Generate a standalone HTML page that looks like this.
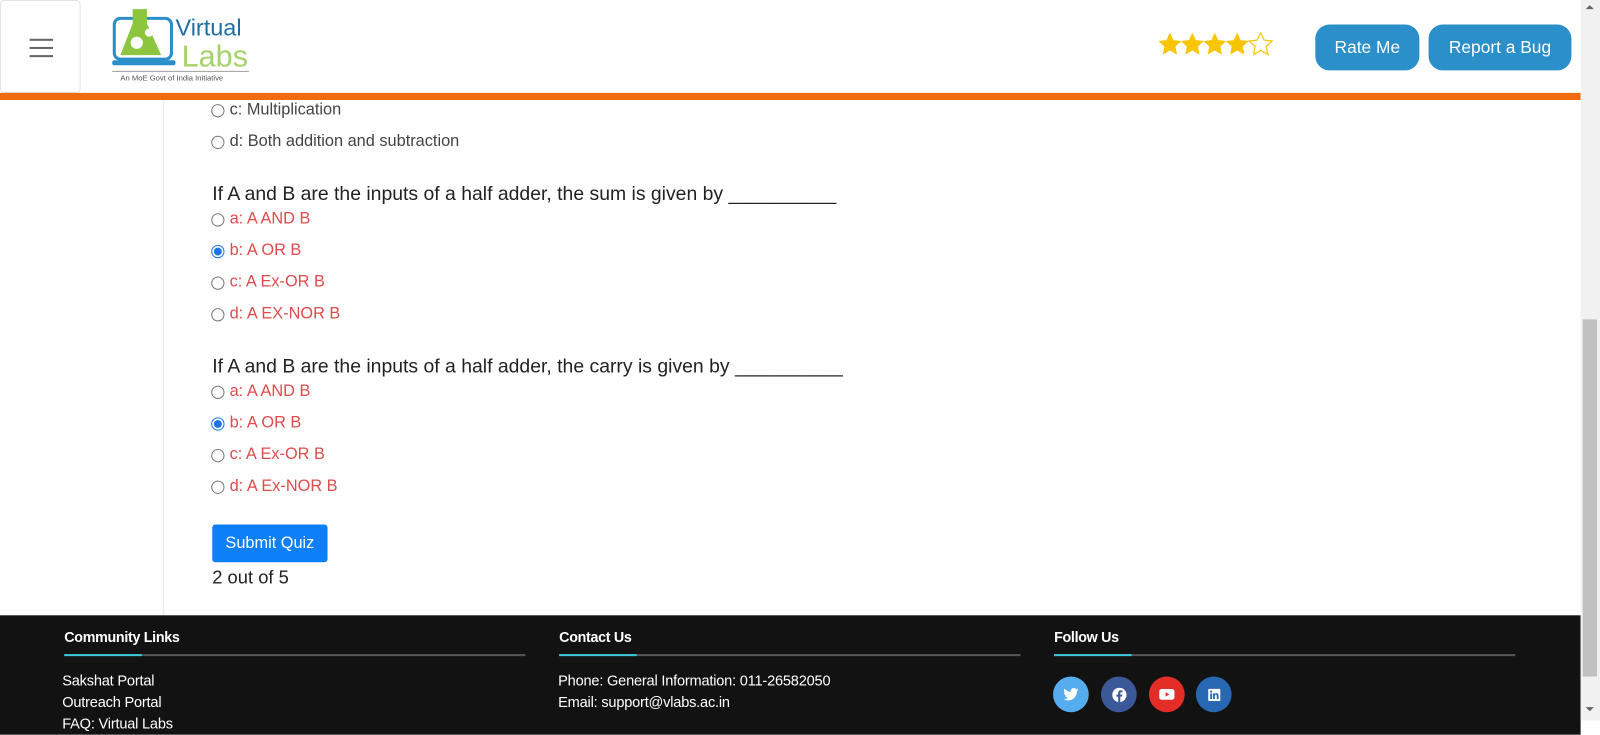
<!DOCTYPE html>
<html><head><meta charset="utf-8"><style>
*{margin:0;padding:0;box-sizing:border-box}
body{width:1600px;height:720px;overflow:hidden;background:#fff;font-family:"Liberation Sans",sans-serif;position:relative}
#w{position:absolute;left:0;top:0;width:1568px;height:706px;transform:scale(1.0204);transform-origin:0 0}
.hdr{position:absolute;left:0;top:0;width:1549px;height:91px;background:#fff}
.burger{position:absolute;left:0;top:0;width:79px;height:91px;border:1px solid #e3e3e3;border-radius:4px}
.burger i{position:absolute;left:28px;width:23px;height:2px;background:#666}
.orange{position:absolute;left:0;top:91px;width:1549px;height:7px;background:#f26a0e}
.btn{position:absolute;top:24px;height:45px;background:#2b8fca;color:#fff;border-radius:14px;font-size:17px;text-align:center;line-height:45px}
.side{position:absolute;left:160px;top:98px;width:1px;height:505px;background:#e5e5e5}
.q{position:absolute;left:208px;font-size:19px;color:#222}
.o{position:absolute;left:207px;font-size:16px;color:#e04b4b;display:flex;align-items:center}
.o.k{color:#444}
.o span.r{width:13px;height:13px;border:1px solid #777;border-radius:50%;margin-right:5px;display:inline-block}
.o span.r.c{border:1px solid #1a73e8;background:radial-gradient(circle,#1a73e8 3.5px,#fff 4.2px)}
.sub{position:absolute;left:208px;top:514px;width:113px;height:37px;background:#0d7ff7;color:#fff;font-size:16px;line-height:37px;text-align:center;border-radius:3px}
.foot{position:absolute;left:0;top:603px;width:1549px;height:117px;background:#121212;color:#fff}
.fh{position:absolute;top:13px;font-size:14px;font-weight:bold;letter-spacing:-0.3px}
.fl{position:absolute;top:38px;height:2px;width:452px;background:#555}
.fl b{display:block;width:76px;height:2px;background:#3ec5d8}
.ft{position:absolute;font-size:14.3px;letter-spacing:-0.2px}
.soc{position:absolute;top:60px;width:35px;height:35px;border-radius:50%;display:flex;align-items:center;justify-content:center}
.sb{position:absolute;left:1549px;top:0;width:19px;height:706px;background:#f1f1f1}
</style></head><body><div id="w">
<div class="hdr">
 <div class="burger"><i style="top:37px"></i><i style="top:45px"></i><i style="top:53px"></i></div>
 <svg style="position:absolute;left:108px;top:6px" width="140" height="78" viewBox="0 0 140 78">
  <rect x="4" y="12" width="56" height="40" rx="6" fill="none" stroke="#2a8fca" stroke-width="3"/>
  <rect x="2" y="53" width="62" height="5" rx="2" fill="#2a8fca"/>
  <path d="M22 3h14v14l14 31H10l12-31z" fill="#8cc63f"/>
  <circle cx="26" cy="36" r="6" fill="#fff"/><circle cx="38" cy="26" r="4" fill="#fff"/>
  <text x="64" y="29" font-family="Liberation Sans" font-size="23" fill="#1d6fa5">Virtual</text>
  <text x="70" y="59" font-family="Liberation Sans" font-size="30" fill="#a6d26a">Labs</text>
  <line x1="2" y1="64" x2="136" y2="64" stroke="#aaa"/>
  <text x="10" y="73" font-family="Liberation Sans" font-size="7.5" fill="#555">An MoE Govt of India Initiative</text>
 </svg>
 <svg style="position:absolute;left:1135px;top:32px" width="114" height="23" viewBox="0 0 114 23">
  <defs><path id="s" d="M11.5 0l3.4 7.3 7.9.9-5.9 5.4 1.6 7.9-7-4-7 4 1.6-7.9L.2 8.2l7.9-.9z"/></defs>
  <use href="#s" fill="#f7c600"/><use href="#s" x="22" fill="#f7c600"/><use href="#s" x="44" fill="#f7c600"/><use href="#s" x="66" fill="#f7c600"/>
  <use href="#s" x="89" fill="none" stroke="#f7c600" stroke-width="1.2"/>
 </svg>
 <div class="btn" style="left:1289px;width:102px">Rate Me</div>
 <div class="btn" style="left:1400px;width:140px">Report a Bug</div>
</div>
<div class="orange"></div>
<div class="side"></div>
<div class="o k" style="top:99px"><span class="r"></span>c: Multiplication</div>
<div class="o k" style="top:130px"><span class="r"></span>d: Both addition and subtraction</div>
<div class="q" style="top:180px">If A and B are the inputs of a half adder, the sum is given by __________</div>
<div class="o" style="top:206px"><span class="r"></span>a: A AND B</div>
<div class="o" style="top:237px"><span class="r c"></span>b: A OR B</div>
<div class="o" style="top:268px"><span class="r"></span>c: A Ex-OR B</div>
<div class="o" style="top:299px"><span class="r"></span>d: A EX-NOR B</div>
<div class="q" style="top:349px">If A and B are the inputs of a half adder, the carry is given by __________</div>
<div class="o" style="top:375px"><span class="r"></span>a: A AND B</div>
<div class="o" style="top:406px"><span class="r c"></span>b: A OR B</div>
<div class="o" style="top:437px"><span class="r"></span>c: A Ex-OR B</div>
<div class="o" style="top:468px"><span class="r"></span>d: A Ex-NOR B</div>
<div class="sub">Submit Quiz</div>
<div class="q" style="top:556px;font-size:18px">2 out of 5</div>
<div class="foot">
 <div class="fh" style="left:63px">Community Links</div><div class="fl" style="left:63px"><b></b></div>
 <div class="fh" style="left:548px">Contact Us</div><div class="fl" style="left:548px"><b></b></div>
 <div class="fh" style="left:1033px">Follow Us</div><div class="fl" style="left:1033px"><b></b></div>
 <div class="ft" style="left:61px;top:57px">Sakshat Portal</div>
 <div class="ft" style="left:61px;top:78px">Outreach Portal</div>
 <div class="ft" style="left:61px;top:99px">FAQ: Virtual Labs</div>
 <div class="ft" style="left:547px;top:57px">Phone: General Information: 011-26582050</div>
 <div class="ft" style="left:547px;top:78px">Email: support@vlabs.ac.in</div>
 <div class="soc" style="left:1032px;background:#55acee"><svg width="15" height="13" viewBox="0 0 24 20"><path d="M24 2.4a10 10 0 0 1-2.8.8A5 5 0 0 0 23.3.5a10 10 0 0 1-3.1 1.2A4.9 4.9 0 0 0 11.8 6 14 14 0 0 1 1.7.9a4.9 4.9 0 0 0 1.5 6.6A4.9 4.9 0 0 1 1 6.9a4.9 4.9 0 0 0 3.9 4.8 5 5 0 0 1-2.2.1 4.9 4.9 0 0 0 4.6 3.4A9.9 9.9 0 0 1 0 17.3 14 14 0 0 0 7.5 19.5c9.1 0 14-7.5 14-14v-.6A10 10 0 0 0 24 2.4z" fill="#fff"/></svg></div>
 <div class="soc" style="left:1079px;background:#3b5998"><svg width="14" height="14" viewBox="0 0 24 24"><circle cx="12" cy="12" r="12" fill="#fff"/><path d="M13.5 24v-9h3l.5-3.5h-3.5V9.3c0-1 .3-1.7 1.8-1.7h1.8V4.5a25 25 0 0 0-2.7-.1c-2.7 0-4.5 1.6-4.5 4.6v2.5H7V15h3v9z" fill="#3b5998"/></svg></div>
 <div class="soc" style="left:1126px;background:#e52d27"><svg width="15" height="11" viewBox="0 0 24 17"><rect width="24" height="17" rx="4" fill="#fff"/><path d="M10 5v7l6-3.5z" fill="#e52d27"/></svg></div>
 <div class="soc" style="left:1172px;background:#2867b2"><svg width="12" height="12" viewBox="0 0 24 24"><rect width="24" height="24" rx="2" fill="#fff"/><path d="M4 9h3.5v11H4zM5.7 3.5a2 2 0 1 1 0 4 2 2 0 0 1 0-4zM9.5 9h3.3v1.5c.5-.9 1.6-1.8 3.4-1.8 3.5 0 4.2 2.3 4.2 5.4V20h-3.5v-5.3c0-1.3 0-2.9-1.8-2.9s-2 1.4-2 2.8V20H9.5z" fill="#2867b2"/></svg></div>
</div>
<div class="sb"><div style="position:absolute;left:2px;top:313px;width:14px;height:350px;background:#c1c1c1"></div>
<div style="position:absolute;left:5px;top:5px;border:4px solid transparent;border-bottom:4px solid #666;border-top:0"></div>
<div style="position:absolute;left:5px;top:693px;border:4px solid transparent;border-top:4px solid #666;border-bottom:0"></div></div>
</div></body></html>
